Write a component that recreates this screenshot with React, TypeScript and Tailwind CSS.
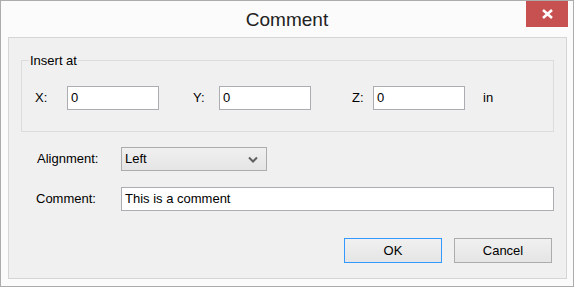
const font = { fontFamily: '"Liberation Sans", Arial, sans-serif' }

function TextBox({ value, className }: { value: string; className: string }) {
  return (
    <div className={`h-[24px] border border-[#abadb3] bg-white flex items-center pl-[3px] text-[13px] text-black ${className}`}>
      {value}
    </div>
  )
}

function Button({ label, focused }: { label: string; focused?: boolean }) {
  return (
    <div
      className={`w-[98px] h-[25px] flex items-center justify-center text-[13px] text-black bg-gradient-to-b from-[#f0f0f0] to-[#e5e5e5] border ${focused ? 'border-[#3399ff]' : 'border-[#acacac]'}`}
    >
      {label}
    </div>
  )
}

export default function App() {
  return (
    <div style={font} className="w-[574px] h-[287px] border border-[#acacac] bg-[#fbfbfb] flex flex-col text-black">
      {/* Title bar */}
      <div className="relative h-[36px] flex items-center justify-center">
        <span className="text-[19px] text-[#222] leading-none mt-[1px]">Comment</span>
        <div className="absolute top-0 right-[5px] w-[42px] h-[26px] bg-[#c75050] flex items-center justify-center">
          <svg width="13" height="10" viewBox="0 0 13 10">
            <path d="M2 1 L11 9 M11 1 L2 9" stroke="white" strokeWidth="2.6" strokeLinecap="butt" />
          </svg>
        </div>
      </div>

      {/* Client area */}
      <div className="flex-1 ml-[7px] mr-[6px] mb-[7px] border border-[#d5d5d5] bg-[#f0f0f0] flex flex-col">
        <fieldset className="mt-[15px] ml-[12px] mr-[12px] h-[79px] border border-[#dcdcdc] pl-[7px]">
          <legend className="px-[1px] text-[13px] leading-[15px]">Insert at</legend>
          <div className="flex items-center mt-[18px] ml-[6px] text-[13px]">
            <span className="w-[32px]">X:</span>
            <TextBox value="0" className="w-[92px]" />
            <span className="ml-[34px] w-[26px]">Y:</span>
            <TextBox value="0" className="w-[92px]" />
            <span className="ml-[41px] w-[21px]">Z:</span>
            <TextBox value="0" className="w-[92px]" />
            <span className="ml-[18px]">in</span>
          </div>
        </fieldset>

        <div className="flex items-center mt-[15px] pl-[28px] text-[13px]">
          <span className="w-[84px]">Alignment:</span>
          <div className="w-[146px] h-[24px] border border-[#acacac] bg-gradient-to-b from-[#f0f0f0] to-[#e5e5e5] flex items-center justify-between pl-[3px] pr-[8px]">
            <span>Left</span>
            <svg width="10" height="7" viewBox="0 0 10 7">
              <path d="M1 1.5 L5 5.5 L9 1.5" fill="none" stroke="#606060" strokeWidth="2" />
            </svg>
          </div>
        </div>

        <div className="flex items-center mt-[16px] pl-[27px] pr-[12px] text-[13px]">
          <span className="w-[85px]">Comment:</span>
          <TextBox value="This is a comment" className="flex-1" />
        </div>

        <div className="flex justify-end gap-[12px] mt-[27px] pr-[14px]">
          <Button label="OK" focused />
          <Button label="Cancel" />
        </div>
      </div>
    </div>
  )
}
